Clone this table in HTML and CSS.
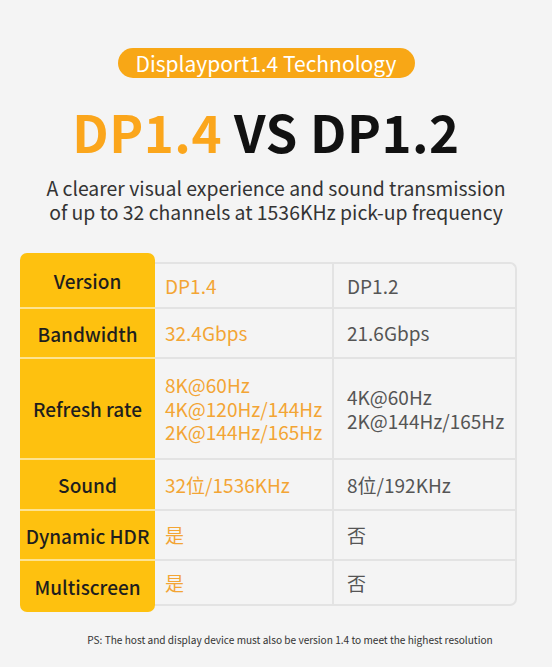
FILE: index.html
```html
<!DOCTYPE html>
<html lang="en">
<head>
  <meta charset="UTF-8">
  <title>DP1.4 VS DP1.2</title>
  <link rel="stylesheet" href="styles.css">
</head>
<body>
  <div class="page">
    <div class="pill">Displayport1.4 Technology</div>
    <h1 class="title"><span class="hl">DP1.4</span> VS DP1.2</h1>
    <p class="sub">A clearer visual experience and sound transmission<br>of up to 32 channels at 1536KHz pick-up frequency</p>

    <div class="table">
      <div class="label first">Version</div>
      <div class="val new top">DP1.4</div>
      <div class="val old top">DP1.2</div>

      <div class="label">Bandwidth</div>
      <div class="val new">32.4Gbps</div>
      <div class="val old">21.6Gbps</div>

      <div class="label">Refresh rate</div>
      <div class="val new">8K@60Hz<br>4K@120Hz/144Hz<br>2K@144Hz/165Hz</div>
      <div class="val old">4K@60Hz<br>2K@144Hz/165Hz</div>

      <div class="label">Sound</div>
      <div class="val new">32位/1536KHz</div>
      <div class="val old">8位/192KHz</div>

      <div class="label">Dynamic HDR</div>
      <div class="val new">是</div>
      <div class="val old">否</div>

      <div class="label last">Multiscreen</div>
      <div class="val new bottom">是</div>
      <div class="val old bottom">否</div>
    </div>

    <p class="note">PS: The host and display device must also be version 1.4 to meet the highest resolution</p>
  </div>
</body>
</html>
```

FILE: styles.css
```css
* {
  box-sizing: border-box;
}

body {
  margin: 0;
  background: #f4f4f4;
  font-family: "Noto Sans CJK SC", "Noto Sans", sans-serif;
  color: #222;
}

.page {
  width: 552px;
  height: 667px;
  padding-top: 48px;
  display: flex;
  flex-direction: column;
  align-items: center;
}

.pill {
  width: 297px;
  height: 30px;
  margin-right: 20px;
  border-radius: 15px;
  background: #f8a716;
  color: #fff;
  font-size: 21px;
  line-height: 30px;
  text-align: center;
}

.title {
  margin: 18px 20px 0 0;
  font-size: 51px;
  line-height: 70px;
  font-weight: bold;
  color: #111;
  letter-spacing: 0.5px;
}

.hl {
  color: #fba61c;
}

.sub {
  margin: 10px 0 0;
  font-size: 19.4px;
  line-height: 24px;
  text-align: center;
  color: #333;
}

.table {
  align-self: flex-start;
  margin: 29px 0 0 20px;
  display: grid;
  grid-template-columns: 135px 177px 185px;
  grid-template-rows: 54px 50px 101px 51px 50px 53px;
}

.label {
  background: #fec10f;
  border-top: 2px solid #fde391;
  display: flex;
  align-items: center;
  justify-content: center;
  font-size: 19px;
  font-weight: 500;
  color: #1e1e1e;
}

.label.first {
  border-top: none;
  border-radius: 7px 7px 0 0;
}

.label.last {
  border-radius: 0 0 7px 7px;
}

.val {
  border-top: 2px solid #e3e3e3;
  display: flex;
  align-items: center;
  padding-left: 10px;
  font-size: 19px;
  line-height: 23.5px;
}

.val.new {
  color: #f3a534;
}

.val.old {
  color: #555;
  padding-left: 13px;
  border-left: 2px solid #e3e3e3;
  border-right: 2px solid #e3e3e3;
}

.val.top {
  margin-top: 9px;
}

.val.old.top {
  border-top-right-radius: 7px;
}

.val.bottom {
  margin-bottom: 6px;
  border-bottom: 2px solid #e3e3e3;
}

.val.old.bottom {
  border-bottom-right-radius: 7px;
}

.note {
  margin: 20px 0 0 28px;
  font-size: 10.1px;
  color: #333;
}
```
